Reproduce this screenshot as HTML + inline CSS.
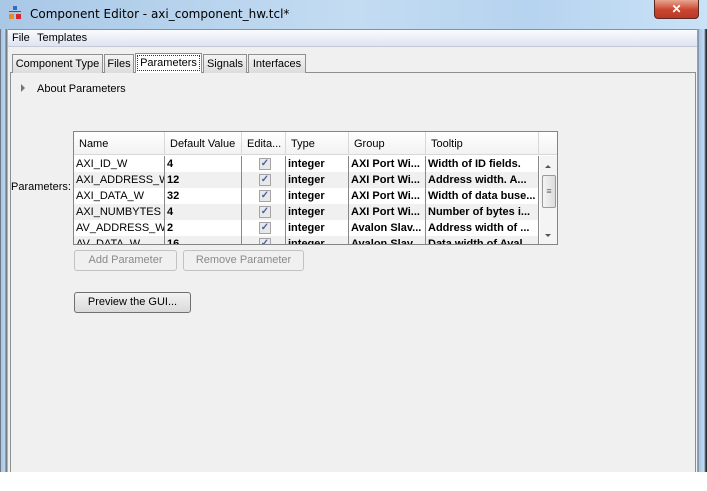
<!DOCTYPE html>
<html><head><style>
*{margin:0;padding:0;box-sizing:border-box}
body{width:707px;height:491px;background:#fff;position:relative;overflow:hidden;font-family:"Liberation Sans",Arial,sans-serif;font-size:11px;color:#000}
.abs{position:absolute}
.title{left:0;top:0;width:707px;height:29px;background:linear-gradient(90deg,#a9c8e6 0%,#c3dcf2 50%,#b6d3ef 75%,#c9e2f7 100%)}
.ttext{left:30px;top:7px;font-size:12px;font-family:"DejaVu Sans",sans-serif;color:#000}
.close{left:654px;top:0;width:45px;height:19px;background:linear-gradient(#e8a590,#c9452f 55%,#b8392a);border:1px solid #5a2a22;border-top:none;border-radius:0 0 4px 4px;color:#fff;font-weight:bold;text-align:center;font-size:12px;line-height:18px}
.lframe{left:0;top:29px;width:8px;height:443px;background:linear-gradient(90deg,#6f7b86 0,#6f7b86 1px,#a6c5e6 1px,#bcd6f0 5px,#5d6670 6px,#8e959c 7px,#c9ced3 8px)}
.rframe{left:697px;top:29px;width:10px;height:443px;background:linear-gradient(90deg,#cfd5db 0,#616b75 1px,#a6c5e6 2px,#c1dbf3 7px,#2c3036 9px)}
.main{left:8px;top:29px;width:689px;height:443px;background:#f0f0f0}
.menu{left:8px;top:29px;width:689px;height:18px;background:linear-gradient(#fafbfd,#dde3f0);border-top:1px solid #8a9099;border-bottom:1px solid #c5cbd6}
.menu span{position:absolute;top:2px;font-size:11px}
.tab{top:54px;height:19px;background:linear-gradient(#f4f4f4,#dcdcdc);border:1px solid #8e8f8f;border-bottom:none;padding:3px 0 0;font-size:11px;white-space:nowrap;text-align:center}
.tab.sel{top:53px;height:20px;background:#fff;border-color:#8e8f8f}
.panel{left:10px;top:72px;width:686px;height:400px;border:1px solid #8e8f8f;border-bottom:none;background:#f0f0f0}
.tbl{left:73px;top:131px;width:485px;height:114px;border:1px solid #848484;background:#fff;overflow:hidden}
.hdr{position:absolute;top:0;height:23px;background:linear-gradient(#fff,#f2f2f2);border-right:1px solid #d8d8d8;border-bottom:1px solid #d8d8d8;padding:6px 0 0 5px;font-size:11px}
.row{position:absolute;left:0;width:465px;height:16px}
.cell{position:absolute;top:0;height:16px;padding:2px 0 0 2px;font-size:11px;border-right:1px solid #888;white-space:nowrap;overflow:hidden}
.b{font-weight:bold}
.cb{position:absolute;top:2px;left:17px;width:12px;height:12px;border:1px solid #a4a4a4;background:#e8e8e8;color:#4a62a0;font-size:10px;line-height:10px;text-align:center;font-weight:bold}
.btn{height:21px;border:1px solid #c2c2c2;border-radius:3px;background:#f0f0f0;color:#8a8a8a;text-align:center;font-size:11px;line-height:19px}
</style></head><body>
<div class="abs title"></div>
<div class="abs" style="left:9px;top:6px;width:12px;height:14px">
<div class="abs" style="left:4px;top:0;width:4px;height:4px;background:#2d6fc4"></div>
<div class="abs" style="left:0;top:5px;width:12px;height:1px;background:#555"></div>
<div class="abs" style="left:0;top:8px;width:5px;height:5px;background:#e88b2a"></div>
<div class="abs" style="left:7px;top:8px;width:5px;height:5px;background:#d12a2a"></div></div>
<div class="abs ttext">Component Editor - axi_component_hw.tcl*</div>
<div class="abs close">✕</div>
<div class="abs main"></div>
<div class="abs lframe"></div>
<div class="abs rframe"></div>
<div class="abs menu"><span style="left:4px">File</span><span style="left:29px">Templates</span></div>
<div class="abs panel"></div>
<div class="abs tab" style="left:12px;width:91px">Component Type</div>
<div class="abs tab" style="left:104px;width:30px">Files</div>
<div class="abs tab sel" style="left:135px;width:67px;outline:1px dotted #333;outline-offset:-3px">Parameters</div>
<div class="abs tab" style="left:203px;width:44px">Signals</div>
<div class="abs tab" style="left:248px;width:58px">Interfaces</div>
<div class="abs" style="left:21px;top:84px;width:0;height:0;border-left:4px solid #777;border-top:4px solid transparent;border-bottom:4px solid transparent"></div>
<div class="abs" style="left:37px;top:83px;font-size:11px">About Parameters</div>
<div class="abs" style="left:11px;top:181px;font-size:11px">Parameters:</div>
<div class="abs tbl">
<div class="hdr" style="left:0;width:91px">Name</div>
<div class="hdr" style="left:91px;width:77px">Default Value</div>
<div class="hdr" style="left:168px;width:44px">Edita...</div>
<div class="hdr" style="left:212px;width:63px">Type</div>
<div class="hdr" style="left:275px;width:77px">Group</div>
<div class="hdr" style="left:352px;width:113px">Tooltip</div>
<div class="hdr" style="left:465px;width:19px;border-right:none"></div>
<div class="row" style="top:24px;background:#fff"><div class="cell" style="left:0;width:91px">AXI_ID_W</div><div class="cell b" style="left:91px;width:77px">4</div><div class="cell" style="left:168px;width:44px"><div class="cb">✓</div></div><div class="cell b" style="left:212px;width:63px">integer</div><div class="cell b" style="left:275px;width:77px">AXI Port Wi...</div><div class="cell b" style="left:352px;width:113px">Width of ID fields.</div></div>
<div class="row" style="top:40px;background:#f0f0f0"><div class="cell" style="left:0;width:91px">AXI_ADDRESS_W</div><div class="cell b" style="left:91px;width:77px">12</div><div class="cell" style="left:168px;width:44px"><div class="cb">✓</div></div><div class="cell b" style="left:212px;width:63px">integer</div><div class="cell b" style="left:275px;width:77px">AXI Port Wi...</div><div class="cell b" style="left:352px;width:113px">Address width. A...</div></div>
<div class="row" style="top:56px;background:#fff"><div class="cell" style="left:0;width:91px">AXI_DATA_W</div><div class="cell b" style="left:91px;width:77px">32</div><div class="cell" style="left:168px;width:44px"><div class="cb">✓</div></div><div class="cell b" style="left:212px;width:63px">integer</div><div class="cell b" style="left:275px;width:77px">AXI Port Wi...</div><div class="cell b" style="left:352px;width:113px">Width of data buse...</div></div>
<div class="row" style="top:72px;background:#f0f0f0"><div class="cell" style="left:0;width:91px">AXI_NUMBYTES</div><div class="cell b" style="left:91px;width:77px">4</div><div class="cell" style="left:168px;width:44px"><div class="cb">✓</div></div><div class="cell b" style="left:212px;width:63px">integer</div><div class="cell b" style="left:275px;width:77px">AXI Port Wi...</div><div class="cell b" style="left:352px;width:113px">Number of bytes i...</div></div>
<div class="row" style="top:88px;background:#fff"><div class="cell" style="left:0;width:91px">AV_ADDRESS_W</div><div class="cell b" style="left:91px;width:77px">2</div><div class="cell" style="left:168px;width:44px"><div class="cb">✓</div></div><div class="cell b" style="left:212px;width:63px">integer</div><div class="cell b" style="left:275px;width:77px">Avalon Slav...</div><div class="cell b" style="left:352px;width:113px">Address width of ...</div></div>
<div class="row" style="top:104px;background:#f0f0f0"><div class="cell" style="left:0;width:91px">AV_DATA_W</div><div class="cell b" style="left:91px;width:77px">16</div><div class="cell" style="left:168px;width:44px"><div class="cb">✓</div></div><div class="cell b" style="left:212px;width:63px">integer</div><div class="cell b" style="left:275px;width:77px">Avalon Slav...</div><div class="cell b" style="left:352px;width:113px">Data width of Aval...</div></div>
<div class="abs" style="left:466px;top:24px;width:18px;height:90px;background:#f4f4f4">
<div class="abs" style="left:5px;top:9px;border-left:3px solid transparent;border-right:3px solid transparent;border-bottom:3px solid #555"></div>
<div class="abs" style="left:2px;top:19px;width:14px;height:33px;border:1px solid #9a9a9a;border-radius:2px;background:linear-gradient(90deg,#f4f4f4,#dcdcdc);font-size:9px;color:#666;text-align:center;line-height:30px">≡</div>
<div class="abs" style="left:5px;top:78px;border-left:3px solid transparent;border-right:3px solid transparent;border-top:3px solid #555"></div></div>
</div>
<div class="abs btn" style="left:74px;top:250px;width:103px">Add Parameter</div>
<div class="abs btn" style="left:183px;top:250px;width:121px">Remove Parameter</div>
<div class="abs btn" style="left:74px;top:292px;width:117px;border-color:#707070;color:#000;background:linear-gradient(#f2f2f2,#dadada)">Preview the GUI...</div>
</body></html>
